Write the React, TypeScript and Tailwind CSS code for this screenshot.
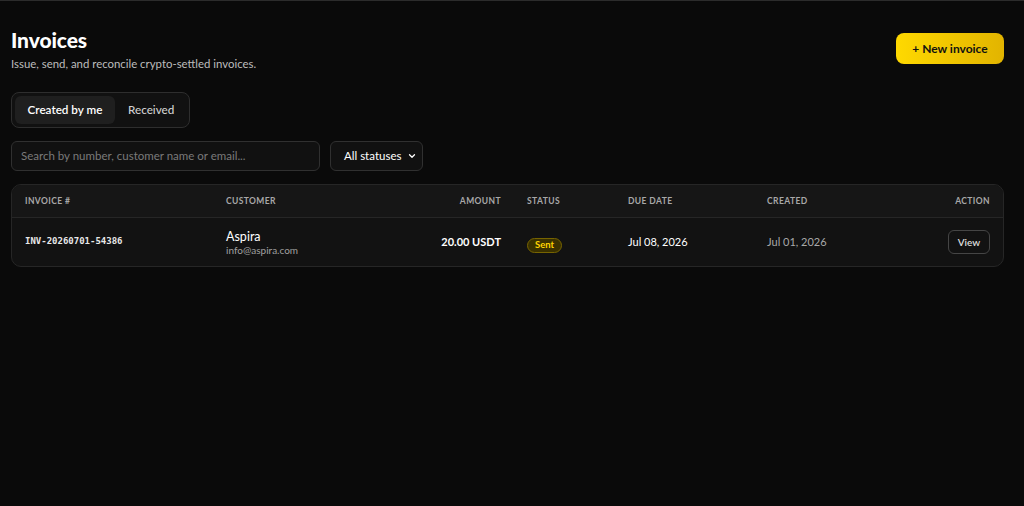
import { ChevronDown } from "lucide-react"

const font = { fontFamily: "Lato, 'Noto Sans', sans-serif" }

export default function App() {
  return (
    <div className="min-h-[506px] bg-[#0a0a0a] border-t border-[#2c2c2c] text-white font-['Lato',sans-serif]">
      <div className="pl-[11px] pr-[20px] pt-[28px]">
        {/* Header */}
        <div className="flex items-start justify-between">
          <div>
            <h1 className="text-[21px] leading-[22px] font-black tracking-[-0.1px]">Invoices</h1>
            <p className="mt-[6px] text-[11.4px] leading-[14px] text-[#bdbdbd]">
              Issue, send, and reconcile crypto-settled invoices.
            </p>
          </div>
          <button className="mt-[4px] h-[31px] w-[108px] rounded-[8px] bg-gradient-to-r from-[#ffd900] to-[#e2b400] text-[12px] font-bold text-[#111]">
            + New invoice
          </button>
        </div>

        {/* Tabs */}
        <div className="mt-[21px] inline-flex items-center gap-[1px] rounded-[8px] border border-[#2e2e2e] bg-[#111111] p-[3px]">
          <button className="h-[28px] w-[100px] rounded-[6px] bg-[#1f1f1f] text-[11.7px] font-semibold text-white">
            Created by me
          </button>
          <button className="h-[28px] px-[12px] text-[11.7px] font-medium text-[#d0d0d0]">Received</button>
        </div>

        {/* Filters */}
        <div className="mt-[13px] flex items-center gap-[10px]">
          <div className="flex h-[30px] w-[309px] items-center rounded-[6px] border border-[#303030] bg-[#111111] px-[9px]">
            <span className="text-[11.5px] text-[#7a7a7a]">Search by number, customer name or email...</span>
          </div>
          <div className="flex h-[30px] w-[93px] items-center justify-between rounded-[6px] border border-[#303030] bg-[#111111] pl-[13px] pr-[5px]">
            <span className="text-[11.5px] text-white">All statuses</span>
            <ChevronDown className="h-[10px] w-[10px] text-white" strokeWidth={3} />
          </div>
        </div>

        {/* Table */}
        <div className="mt-[13px] overflow-hidden rounded-[10px] border border-[#262626] bg-[#121212]" style={font}>
          <div className="grid h-[33px] grid-cols-[201px_201px_100px_101px_139px_1fr_100px] items-center border-b border-[#262626] bg-[#161616] text-[8.5px] font-bold uppercase tracking-[0.4px] text-[#a8a8a8]">
            <div className="pl-[13px]">Invoice #</div>
            <div className="px-[13px]">Customer</div>
            <div className="px-[13px] text-right">Amount</div>
            <div className="px-[13px]">Status</div>
            <div className="px-[13px]">Due date</div>
            <div className="px-[13px]">Created</div>
            <div className="px-[13px] text-right">Action</div>
          </div>
          <div className="grid h-[48px] grid-cols-[201px_201px_100px_101px_139px_1fr_100px] items-center">
            <div className="pl-[13px] font-['DejaVu_Sans_Mono',monospace] text-[9px] font-bold text-[#e8e8e8]">
              INV-20260701-54386
            </div>
            <div className="px-[13px] pt-[2px]">
              <div className="text-[12.5px] leading-[14px] text-white">Aspira</div>
              <div className="text-[10px] leading-[13px] text-[#a0a0a0]">info@aspira.com</div>
            </div>
            <div className="px-[13px] text-right text-[11px] font-bold text-white">20.00 USDT</div>
            <div className="px-[13px]">
              <span className="inline-flex h-[15px] items-center rounded-full border border-[#776400] bg-[#3a3100] px-[7px] text-[9.5px] font-bold text-[#ffd400]">
                Sent
              </span>
            </div>
            <div className="px-[13px] text-[11px] text-white">Jul 08, 2026</div>
            <div className="px-[13px] text-[11px] text-[#a8a8a8]">Jul 01, 2026</div>
            <div className="flex justify-end px-[13px]">
              <button className="h-[24px] w-[42px] rounded-[6px] border border-[#454545] text-[10px] font-semibold text-[#dcdcdc]">
                View
              </button>
            </div>
          </div>
        </div>
      </div>
    </div>
  )
}
